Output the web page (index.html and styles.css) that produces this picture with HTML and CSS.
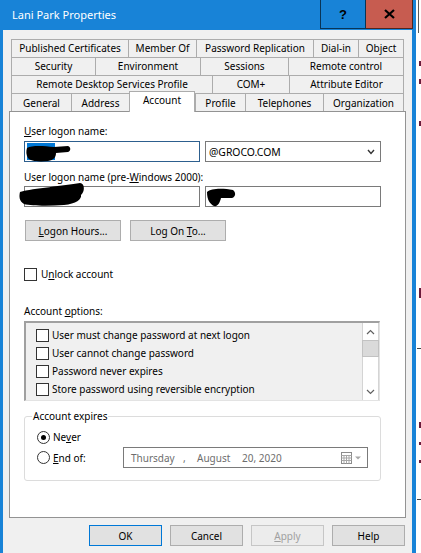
FILE: index.html
```html
<!DOCTYPE html>
<html>
<head>
<meta charset="utf-8">
<title>Lani Park Properties</title>
<link rel="stylesheet" href="styles.css">
</head>
<body>
<div class="screen">
  <div class="window">
    <div class="titlebar">
      <div class="title">Lani Park Properties</div>
      <div class="tb-btn help">?</div>
      <div class="tb-btn close">
        <svg width="11" height="10" viewBox="0 0 11 10"><path d="M1 1 L10 9 M10 1 L1 9" stroke="#000" stroke-width="2.2" fill="none"/></svg>
      </div>
    </div>
    <div class="dlg">
      <div class="tabs">
        <div class="tabrow r1">
          <div class="tab">Published Certificates</div>
          <div class="tab">Member Of</div>
          <div class="tab">Password Replication</div>
          <div class="tab">Dial-in</div>
          <div class="tab">Object</div>
        </div>
        <div class="tabrow r2">
          <div class="tab">Security</div>
          <div class="tab">Environment</div>
          <div class="tab">Sessions</div>
          <div class="tab">Remote control</div>
        </div>
        <div class="tabrow r3">
          <div class="tab">Remote Desktop Services Profile</div>
          <div class="tab">COM+</div>
          <div class="tab">Attribute Editor</div>
        </div>
        <div class="tabrow r4">
          <div class="tab">General</div>
          <div class="tab">Address</div>
          <div class="tab sel">Account</div>
          <div class="tab">Profile</div>
          <div class="tab">Telephones</div>
          <div class="tab">Organization</div>
        </div>
        <div class="panel">
          <div class="lbl l1"><u>U</u>ser logon name:</div>
          <div class="fieldrow f1">
            <div class="tbox focus">
              <svg class="redact" width="60" height="30" viewBox="0 0 60 30">
                <rect x="3" y="2" width="28" height="17" fill="#0078d7"/>
                <path d="M3,7 C8,4 20,5 30,6 L44,5 C47,6 47,10 44,11 L32,12 C32,16 30,19 24,20 C14,21 6,20 4,17 C2,14 2,10 3,7 Z" fill="#000"/>
              </svg>
            </div>
            <div class="tbox combo">
              <span>@GROCO.COM</span>
              <svg width="8" height="6" viewBox="0 0 8 6"><path d="M1 1 L4 4.5 L7 1" stroke="#333" stroke-width="1.4" fill="none"/></svg>
            </div>
          </div>
          <div class="lbl l2">User logon name (pre-<u>W</u>indows 2000):</div>
          <div class="fieldrow f2">
            <div class="tbox">
              <svg class="redact r-b" width="70" height="30" viewBox="-6 -5 70 30">
                <path d="M-4,6 C10,2 40,0 56,-3 C61,-3 61,6 57,9 C58,13 52,18 40,19 C25,20 8,20 0,18 C-5,15 -5,10 -4,6 Z" fill="#000"/>
              </svg>
            </div>
            <div class="tbox">
              <svg class="redact" width="40" height="30" viewBox="0 0 40 30">
                <path d="M2,6 C6,2 18,2 28,4 C31,6 31,11 27,12 L16,12 C15,16 13,21 9,20 C5,18 2,14 2,6 Z" fill="#000"/>
              </svg>
            </div>
          </div>
          <div class="btnrow">
            <div class="btn"><span><u>L</u>ogon Hours...</span></div>
            <div class="btn"><span>Log On <u>T</u>o...</span></div>
          </div>
          <div class="check-row unlock">
            <span class="cb"></span>
            <span>U<u>n</u>lock account</span>
          </div>
          <div class="lbl l3">Account <u>o</u>ptions:</div>
          <div class="list">
            <div class="items">
              <div class="item"><span class="cb"></span><span>User must change password at next logon</span></div>
              <div class="item"><span class="cb"></span><span>User cannot change password</span></div>
              <div class="item"><span class="cb"></span><span>Password never expires</span></div>
              <div class="item"><span class="cb"></span><span>Store password using reversible encryption</span></div>
            </div>
            <div class="scroll">
              <div class="sb-btn"><svg width="9" height="6" viewBox="0 0 9 6"><path d="M1 5 L4.5 1.5 L8 5" stroke="#606060" stroke-width="1.2" fill="none"/></svg></div>
              <div class="sb-thumb"></div>
              <div class="sb-track"></div>
              <div class="sb-btn"><svg width="9" height="6" viewBox="0 0 9 6"><path d="M1 1 L4.5 4.5 L8 1" stroke="#606060" stroke-width="1.2" fill="none"/></svg></div>
            </div>
          </div>
          <div class="group">
            <div class="group-title">Account expires</div>
            <div class="radio-row">
              <span class="rb on"></span><span>Ne<u>v</u>er</span>
            </div>
            <div class="radio-row r-end">
              <div class="rlabel"><span class="rb"></span><span><u>E</u>nd of:</span></div>
              <div class="date">
                <span class="d1">Thursday</span><span class="d2">,</span><span class="d3">August</span><span class="d4">20, 2020</span>
                <svg class="cal" width="21" height="12" viewBox="0 0 21 12">
                  <rect x="0.5" y="0.5" width="10" height="11" fill="#fff" stroke="#8c8c8c"/>
                  <path d="M0.5 3.5 H10.5 M0.5 6 H10.5 M0.5 8.5 H10.5 M3 3.5 V11.5 M5.5 3.5 V11.5 M8 3.5 V11.5" stroke="#a8a8a8" stroke-width="1"/>
                  <path d="M14 4.5 L20 4.5 L17 7.5 Z" fill="#a8a8a8"/>
                </svg>
              </div>
            </div>
          </div>
        </div>
      </div>
      <div class="footer">
        <div class="btn dbtn default">OK</div>
        <div class="btn dbtn">Cancel</div>
        <div class="btn dbtn disabled"><span><u>A</u>pply</span></div>
        <div class="btn dbtn">Help</div>
      </div>
    </div>
  </div>
  <div class="desk">
    <div class="vline"></div>
    <div class="mk m1"></div>
    <div class="mk m2"></div>
    <div class="mk m3"></div>
    <div class="mk m4"></div>
    <div class="dash d-1"></div>
    <div class="mk m5"></div>
    <div class="mk m6"></div>
    <div class="mk m7"></div>
    <div class="dash d-2"></div>
  </div>
</div>
</body>
</html>
```
FILE: styles.css
```css
* { box-sizing: border-box; }
html, body { margin: 0; padding: 0; }
body {
  width: 421px;
  height: 553px;
  overflow: hidden;
  background: #ffffff;
  font-family: "Noto Sans", "Open Sans", sans-serif;
  font-size: 10px;
  color: #000;
}
u { text-decoration: underline; text-underline-offset: 1px; }

.screen { display: flex; height: 553px; }

.window {
  width: 416px;
  flex: none;
  background: #1883d7;
  display: flex;
  flex-direction: column;
}

.titlebar {
  height: 30px;
  display: flex;
  align-items: flex-start;
  padding-right: 3px;
  flex: none;
}
.title {
  flex: 1;
  padding-left: 12px;
  line-height: 30px;
  font-size: 11px;
  color: #fff;
}
.tb-btn {
  height: 29px;
  display: flex;
  align-items: center;
  justify-content: center;
  border: 1px solid rgba(0, 0, 0, 0.6);
  border-top: none;
}
.help {
  width: 46px;
  font-family: "Liberation Sans", sans-serif;
  font-weight: bold;
  font-size: 13px;
  color: #000;
}
.close {
  width: 47px;
  background: #c75c50;
  border-left: none;
}

.dlg {
  flex: 1;
  margin: 0 4px 0 3px;
  background: #f0f0f0;
  padding: 9px 6px 0;
  display: flex;
  flex-direction: column;
}

.tabs { display: flex; flex-direction: column; }
.tabrow { display: grid; height: 18px; margin: 0 2px; }
.r1 { grid-template-columns: 117px 68px 117px 45px 46px; }
.r2 { grid-template-columns: 84px 105px 88px 116px; }
.r3 { grid-template-columns: 201px 77px 115px; }
.r4 { grid-template-columns: 60px 58px 66px 50px 78px 81px; }

.tab {
  border-left: 1px solid #acacac;
  border-top: 1px solid #acacac;
  background: #f0f0f0;
  display: flex;
  align-items: center;
  justify-content: center;
  white-space: nowrap;
  line-height: 17px;
}
.tab:last-child { border-right: 1px solid #acacac; }
.tab.sel {
  position: relative;
  z-index: 1;
  margin-top: -2px;
  height: 21px;
  background: #fff;
  border-right: 1px solid #acacac;
  align-items: flex-start;
}

.panel {
  height: 407px;
  background: #fff;
  border: 1px solid #939393;
  padding: 0 13px 0 14px;
  display: flex;
  flex-direction: column;
}

.lbl { line-height: 16px; }
.l1 { margin-top: 11px; }
.l2 { margin-top: 7px; }
.l3 { margin-top: 21px; }

.fieldrow { display: flex; gap: 5px; height: 21px; }
.f1 { margin-top: 2px; }
.f2 { margin-top: 1px; }

.tbox {
  position: relative;
  width: 176px;
  height: 21px;
  background: #fff;
  border: 1px solid #7a7a7a;
}
.tbox.focus { border-color: #2d5f8e; }
.combo {
  display: flex;
  align-items: center;
  justify-content: space-between;
  padding: 0 5px 0 3px;
  font-size: 10.4px;
}
.redact { position: absolute; left: -1px; top: -1px; overflow: visible; }
.redact.r-b { left: -7px; top: -6px; }

.btnrow { display: flex; gap: 9px; margin-top: 13px; padding-left: 1px; }
.btn {
  width: 96px;
  height: 21px;
  background: #e1e1e1;
  border: 1px solid #adadad;
  display: flex;
  align-items: center;
  justify-content: center;
}

.cb {
  width: 13px;
  height: 13px;
  flex: none;
  border: 1px solid #333;
  background: #fff;
}
.check-row { display: flex; align-items: center; gap: 4px; height: 16px; }
.unlock { margin-top: 25px; }

.list {
  margin-top: 2px;
  width: 356px;
  height: 80px;
  background: #f0f0f0;
  border-style: solid;
  border-width: 2px 1px 1px 2px;
  border-color: #a0a0a0 #e3e3e3 #e3e3e3 #a0a0a0;
  display: flex;
}
.items { flex: 1; padding: 3px 0 0 10px; }
.item { height: 18px; display: flex; align-items: center; gap: 3px; }

.scroll {
  width: 17px;
  background: #fff;
  border-left: 1px solid #d4d4d4;
  border-right: 1px solid #d4d4d4;
  display: flex;
  flex-direction: column;
}
.sb-btn { height: 17px; display: flex; align-items: center; justify-content: center; }
.sb-thumb { height: 17px; background: #dadada; border: 1px solid #c2c2c2; margin: 0 -1px; }
.sb-track { flex: 1; }

.group {
  position: relative;
  margin-top: 15px;
  width: 357px;
  height: 65px;
  border: 1px solid #dcdcdc;
  border-radius: 3px;
  padding: 10px 0 0 12px;
}
.group-title {
  position: absolute;
  top: -9px;
  left: 7px;
  padding: 0 1px;
  background: #fff;
  line-height: 16px;
}
.radio-row { display: flex; align-items: center; height: 20px; gap: 3px; }
.r-end { height: 21px; gap: 0; }
.rlabel { width: 86px; display: flex; align-items: center; gap: 3px; }
.rb {
  width: 13px;
  height: 13px;
  flex: none;
  border: 1px solid #333;
  border-radius: 50%;
  background: #fff;
  display: flex;
  align-items: center;
  justify-content: center;
}
.rb.on::after {
  content: "";
  width: 5px;
  height: 5px;
  border-radius: 50%;
  background: #000;
}

.date {
  width: 245px;
  height: 21px;
  border: 1px solid #7a7a7a;
  display: flex;
  align-items: center;
  padding: 0 5px 0 7px;
  color: #6d6d6d;
  white-space: nowrap;
}
.d1 { width: 52px; }
.d2 { width: 14px; }
.d3 { width: 45px; }
.cal { margin-left: auto; }

.footer {
  display: flex;
  justify-content: flex-end;
  gap: 8px;
  margin-top: 7px;
  padding-right: 1px;
}
.dbtn { width: 73px; }
.default { border-color: #0078d7; }
.disabled { background: #ececec; border-color: #c6c6c6; color: #a0a0a0; }

.desk { flex: 1; display: flex; flex-direction: column; }
.vline { width: 1px; height: 33px; margin-left: 2px; background: #5a5a5a; }
.mk { width: 2px; margin-left: 3px; background: #6b1a3a; }
.m1 { margin-top: 28px; height: 5px; }
.m2 { margin-top: 13px; height: 5px; }
.m3 { margin-top: 37px; height: 5px; }
.m4 { margin-top: 162px; height: 10px; }
.m5 { margin-top: 73px; height: 6px; }
.m6 { margin-top: 14px; height: 3px; }
.m7 { margin-top: 15px; height: 3px; }
.dash { width: 4px; height: 1px; margin-left: 1px; background: #444; }
.d-1 { margin-top: 50px; }
.d-2 { margin-top: 36px; }
```
